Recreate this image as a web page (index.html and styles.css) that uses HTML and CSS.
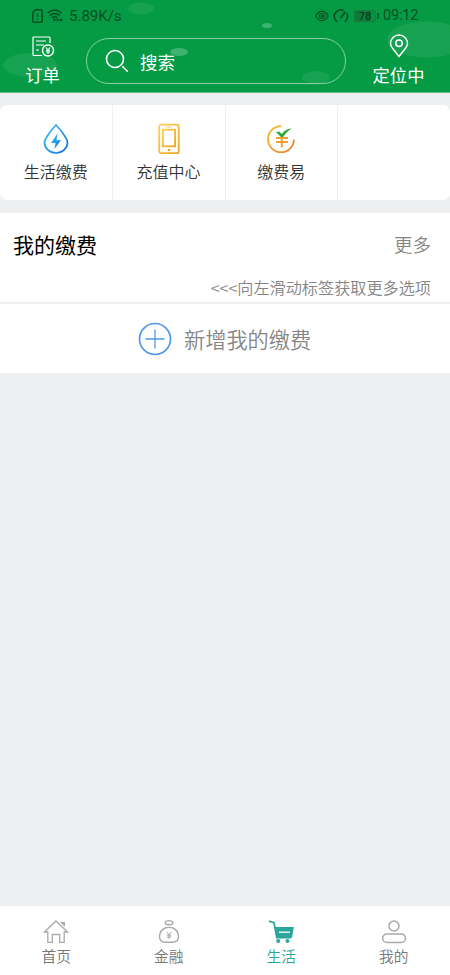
FILE: index.html
```html
<!DOCTYPE html>
<html lang="zh-CN">
<head>
<meta charset="utf-8">
<title>生活</title>
<link rel="stylesheet" href="styles.css">
</head>
<body>
<div class="app">
  <header class="header">
    <svg class="bubbles" width="450" height="93" viewBox="0 0 450 93">
      <ellipse cx="141" cy="8.500" rx="13" ry="6"/>
      <ellipse cx="30" cy="65" rx="27" ry="12"/>
      <ellipse cx="179" cy="52" rx="9" ry="4" class="brighter"/>
      <ellipse cx="267" cy="25.500" rx="5" ry="2.500" class="brighter"/>
      <ellipse cx="316" cy="77.500" rx="14" ry="6.500"/>
      <ellipse cx="427" cy="39.500" rx="40" ry="18"/>
    </svg>
    <div class="status">
      <svg class="sim" width="11" height="14" viewBox="0 0 11 14" fill="none" stroke="currentColor" stroke-width="1.5"><path d="M3.500.8H9Q10.200.8 10.200 2v10q0 1.200-1.200 1.200H2Q.8 13.200.8 12V3.500z"/><path d="M5.500 4v4M5.500 9.300v1.400"/></svg>
      <svg class="wifi" width="16" height="13" viewBox="0 0 16 13" fill="none" stroke="currentColor" stroke-width="1.500"><path d="M.7 4.200Q7.500-2.200 14.500 4.200M2.700 6.600Q7.500 2.300 12.600 6.600M4.800 8.900Q7.500 6.600 10.300 8.700"/><circle cx="7.300" cy="10.800" r="1.300" fill="currentColor" stroke="none"/><path d="M9.500 11h2M12.500 11h2.800" stroke-width="2.400"/></svg>
      <span class="speed">5.89K/s</span>
      <svg class="eye" width="14" height="12" viewBox="0 0 14 12" fill="none" stroke="currentColor" stroke-width="1.200"><path d="M.7 6Q3.500 1.200 7 1.200T13.300 6Q10.500 10.800 7 10.800T.7 6z"/><circle cx="7" cy="6" r="2.800" stroke-width="1"/><circle cx="7" cy="6" r="1.500" fill="currentColor" stroke="none"/></svg>
      <svg class="gauge" width="16" height="14" viewBox="0 0 16 14" fill="none" stroke="currentColor" stroke-width="1.600"><path d="M4 12.800L2.300 10.800A6.500 6.500 0 0 1 10.500 1.500M14 4.500a6.500 6.500 0 0 1-.5 6.300L12 12.800"/><path d="M7.500 9L12.500 2.800" stroke-width="2"/></svg>
      <span class="battery">78</span><i class="tip"></i>
      <span class="clock">09:12</span>
    </div>
    <div class="topbar">
      <a class="action orders">
        <svg width="24" height="22" viewBox="0 0 24 22" fill="none" stroke="currentColor" stroke-width="1.200"><path d="M11 19.500H3Q2 19.500 2 18.500V2Q2 1 3 1H18Q19 1 19 2V7M5 5h10M5 9h8M5 14h3"/><circle cx="17" cy="14.500" r="5.500" stroke-width="1.400"/><path d="M15 11.500l2 2.500 2-2.500M17 14v4M15 14.500h4M15 16h4"/></svg>
        <span>订单</span>
      </a>
      <div class="search">
        <svg width="24" height="24" viewBox="0 0 24 24" fill="none" stroke="currentColor" stroke-width="1.600"><circle cx="10" cy="10" r="8.500"/><path d="M17.300 17.300l5.500 5.500"/></svg>
        <span>搜索</span>
      </div>
      <a class="action locate">
        <svg width="20" height="24" viewBox="0 0 20 24" fill="none" stroke="currentColor" stroke-width="1.500"><path d="M10 22.500L3.700 14.600Q1.500 12 1.500 9.500a8.500 8.500 0 0 1 17 0Q18.500 12 16.300 14.600z"/><circle cx="10" cy="9.300" r="3.200"/></svg>
        <span>定位中</span>
      </a>
    </div>
  </header>

  <section class="services">
    <a class="service">
      <svg width="30" height="32" viewBox="0 0 30 32"><defs><linearGradient id="blue" x1="0" y1="0" x2="1" y2="1"><stop offset="0" stop-color="#35c4f5"/><stop offset="1" stop-color="#1470e4"/></linearGradient></defs><path d="M15 2Q20 7 24 13.500Q26.500 17.300 26.500 19.500A11.500 10.500 0 0 1 3.500 19.500Q3.500 17.300 6 13.500Q10 7 15 2z" fill="none" stroke="url(#blue)" stroke-width="1.700"/><path d="M16.500 10.500L10 20h4.500l-1 6L20 17.200h-4.500z" fill="url(#blue)"/></svg>
      <span>生活缴费</span>
    </a>
    <a class="service">
      <svg width="30" height="32" viewBox="0 0 30 32" fill="none"><defs><linearGradient id="gold" x1="0" y1="0" x2="1" y2="1"><stop offset="0" stop-color="#ffd05a"/><stop offset="1" stop-color="#eda526"/></linearGradient></defs><rect x="5.200" y="1.700" width="19.500" height="28.500" rx="2" stroke="url(#gold)" stroke-width="1.800"/><rect x="8.900" y="6.700" width="12.200" height="16.600" stroke="url(#gold)" stroke-width="1.900"/><path d="M12.500 4h5" stroke="#f5c569"/><circle cx="15" cy="27" r="1.300" fill="#eda526"/></svg>
      <span>充值中心</span>
    </a>
    <a class="service">
      <svg width="30" height="32" viewBox="0 0 30 32" fill="none"><defs><linearGradient id="orange" x1="0" y1="0" x2="1" y2="1"><stop offset="0" stop-color="#f7be32"/><stop offset="1" stop-color="#e8802b"/></linearGradient></defs><path d="M15 3.200A13 13 0 1 0 28 16.500" stroke="url(#orange)" stroke-width="1.800"/><path d="M10 15h12M10 19h12M15.800 13v11.500" stroke="#f0a02f" stroke-width="1.900"/><path d="M10 9l3-.5 2.800 2.600Q19 6 25.500 5.200Q20 9 17 14H15z" fill="#29a936"/></svg>
      <span>缴费易</span>
    </a>
    <div class="service"></div>
  </section>

  <section class="bills">
    <div class="bills-head"><h2>我的缴费</h2><a>更多</a></div>
    <p class="hint">&lt;&lt;&lt;向左滑动标签获取更多选项</p>
    <a class="add">
      <svg width="34" height="34" viewBox="0 0 34 34" fill="none" stroke="#5297e3"><circle cx="17" cy="17" r="15.500" stroke-width="1.700"/><path d="M7.500 17h19M17 7.500v19" stroke-width="1.300"/></svg>
      <span>新增我的缴费</span>
    </a>
  </section>

  <nav class="tabs">
    <a class="tab">
      <svg width="28" height="26" viewBox="0 0 28 26" fill="none" stroke="currentColor" stroke-width="1.300"><path d="M2.500 13L14 2 25.500 13H22.200v10.300H17.700V15.500H10.300v7.800H5.800V13z"/><path d="M18 3h5v5z" fill="currentColor" stroke="none"/></svg>
      <span>首页</span>
    </a>
    <a class="tab">
      <svg width="28" height="26" viewBox="0 0 28 26" fill="none" stroke="currentColor" stroke-width="1.400"><ellipse cx="14" cy="3.700" rx="3.800" ry="2.100"/><path d="M10 9Q14 7.800 18 9C21 10.500 23.500 14 23.500 17.500Q23.500 23.300 17.500 23.300H10.500Q4.500 23.300 4.500 17.500C4.500 14 7 10.500 10 9z"/><path d="M11.700 13l2.300 3 2.300-3M14 16v4M11.800 16.200h4.400M11.800 18h4.400" stroke-width="1"/></svg>
      <span>金融</span>
    </a>
    <a class="tab active">
      <svg width="28" height="26" viewBox="0 0 28 26" fill="none" stroke="currentColor"><path d="M2 2.200L7 3.700 9.800 18.500H24" stroke-width="1.800"/><path d="M7.500 8H26.800L25 18.800H10z" fill="currentColor" stroke="none"/><path d="M12 13.200h11" stroke="#fff" stroke-width="1.300"/><circle cx="11.200" cy="22" r="2" fill="currentColor" stroke="none"/><circle cx="20.500" cy="22" r="2" fill="currentColor" stroke="none"/></svg>
      <span>生活</span>
    </a>
    <a class="tab">
      <svg width="28" height="26" viewBox="0 0 28 26" fill="none" stroke="currentColor" stroke-width="1.500"><circle cx="14" cy="7" r="5"/><rect x="2.700" y="15" width="22.800" height="8.500" rx="4.250"/></svg>
      <span>我的</span>
    </a>
  </nav>
</div>
</body>
</html>
```
FILE: styles.css
```css
* { box-sizing: border-box; }
body {
  margin: 0;
  font-family: "Noto Sans CJK SC", sans-serif;
  font-weight: 350;
  background: #edeff1;
}
svg { display: block; flex: none; }
.app { height: 975px; display: flex; flex-direction: column; }

.header {
  position: relative;
  height: 93px;
  background: #049b44;
  border-bottom: 1px solid #64bd89;
  color: #fff;
}
.bubbles { position: absolute; left: 0; top: 0; fill: rgba(255, 255, 255, .08); }
.bubbles .brighter { fill: rgba(255, 255, 255, .23); }
.status {
  position: relative;
  height: 30px;
  padding: 1px 32px 0 32px;
  display: flex;
  align-items: center;
  color: #045022;
  font: 15px/30px Roboto, sans-serif;
}
.wifi { margin-left: 4px; }
.speed { margin-left: 6px; }
.eye { margin-left: auto; }
.gauge { margin-left: 4px; }
.battery {
  margin-left: 5px;
  width: 22px;
  height: 12px;
  border: 1px solid #23753f;
  border-radius: 2px;
  background: linear-gradient(90deg, #0a7c3a 78%, #079040 78%);
  color: #03401b;
  font-size: 11px;
  font-weight: 500;
  line-height: 11px;
  text-align: center;
}
.tip { width: 2px; height: 6px; margin-left: 1px; background: #08602b; }
.clock { margin-left: 4px; width: 35px; font-size: 14.500px; letter-spacing: -.2px; white-space: nowrap; }

.topbar { position: relative; display: flex; height: 62px; }
.action {
  width: 86px;
  display: flex;
  flex-direction: column;
  align-items: center;
  font-size: 17.300px;
  font-weight: 400;
  line-height: 24px;
}
.orders { padding-top: 6px; padding-right: 1px; }
.orders span { margin-top: 5px; }
.locate { width: 104px; padding-top: 4px; padding-left: 1px; }
.locate span { margin-top: 5px; }
.search {
  width: 260px;
  height: 46px;
  margin-top: 8px;
  padding-left: 18px;
  display: flex;
  align-items: center;
  gap: 11px;
  border: 1px solid #8bcfa5;
  border-radius: 23px;
  font-size: 17.500px;
  font-weight: 400;
}

.services {
  display: flex;
  height: 95px;
  margin-top: 12px;
  border-radius: 7px;
  background: #fff;
}
.service {
  flex: 1;
  padding-top: 18px;
  display: flex;
  flex-direction: column;
  align-items: center;
  border-right: 1px solid #eff0f2;
  color: #333;
  font-size: 16px;
  line-height: 24px;
}
.service:last-child { border-right: 0; }
.service span { margin-top: 4px; }

.bills { margin-top: 13px; height: 160px; background: #fff; color: #858585; }
.bills-head {
  height: 62px;
  padding: 0 19px 0 13px;
  display: flex;
  align-items: center;
  justify-content: space-between;
  font-size: 18.500px;
}
h2 { margin: 0; color: #000; font-size: 21px; font-weight: 400; }
.hint {
  margin: 0;
  height: 29px;
  padding-right: 19px;
  border-bottom: 2px solid #eeeff1;
  font-size: 16.150px;
  line-height: 24px;
  text-align: right;
}
.add {
  height: 69px;
  padding-left: 138px;
  display: flex;
  align-items: center;
  gap: 12px;
  font-size: 21.200px;
}

.tabs { display: flex; height: 69px; margin-top: auto; background: #fff; }
.tab {
  flex: 1;
  padding-top: 13px;
  display: flex;
  flex-direction: column;
  align-items: center;
  color: #a9a9a9;
  font-size: 14.700px;
  line-height: 22px;
}
.tab span { color: #777; }
.tab.active, .tab.active span { color: #2aa69a; }
```
